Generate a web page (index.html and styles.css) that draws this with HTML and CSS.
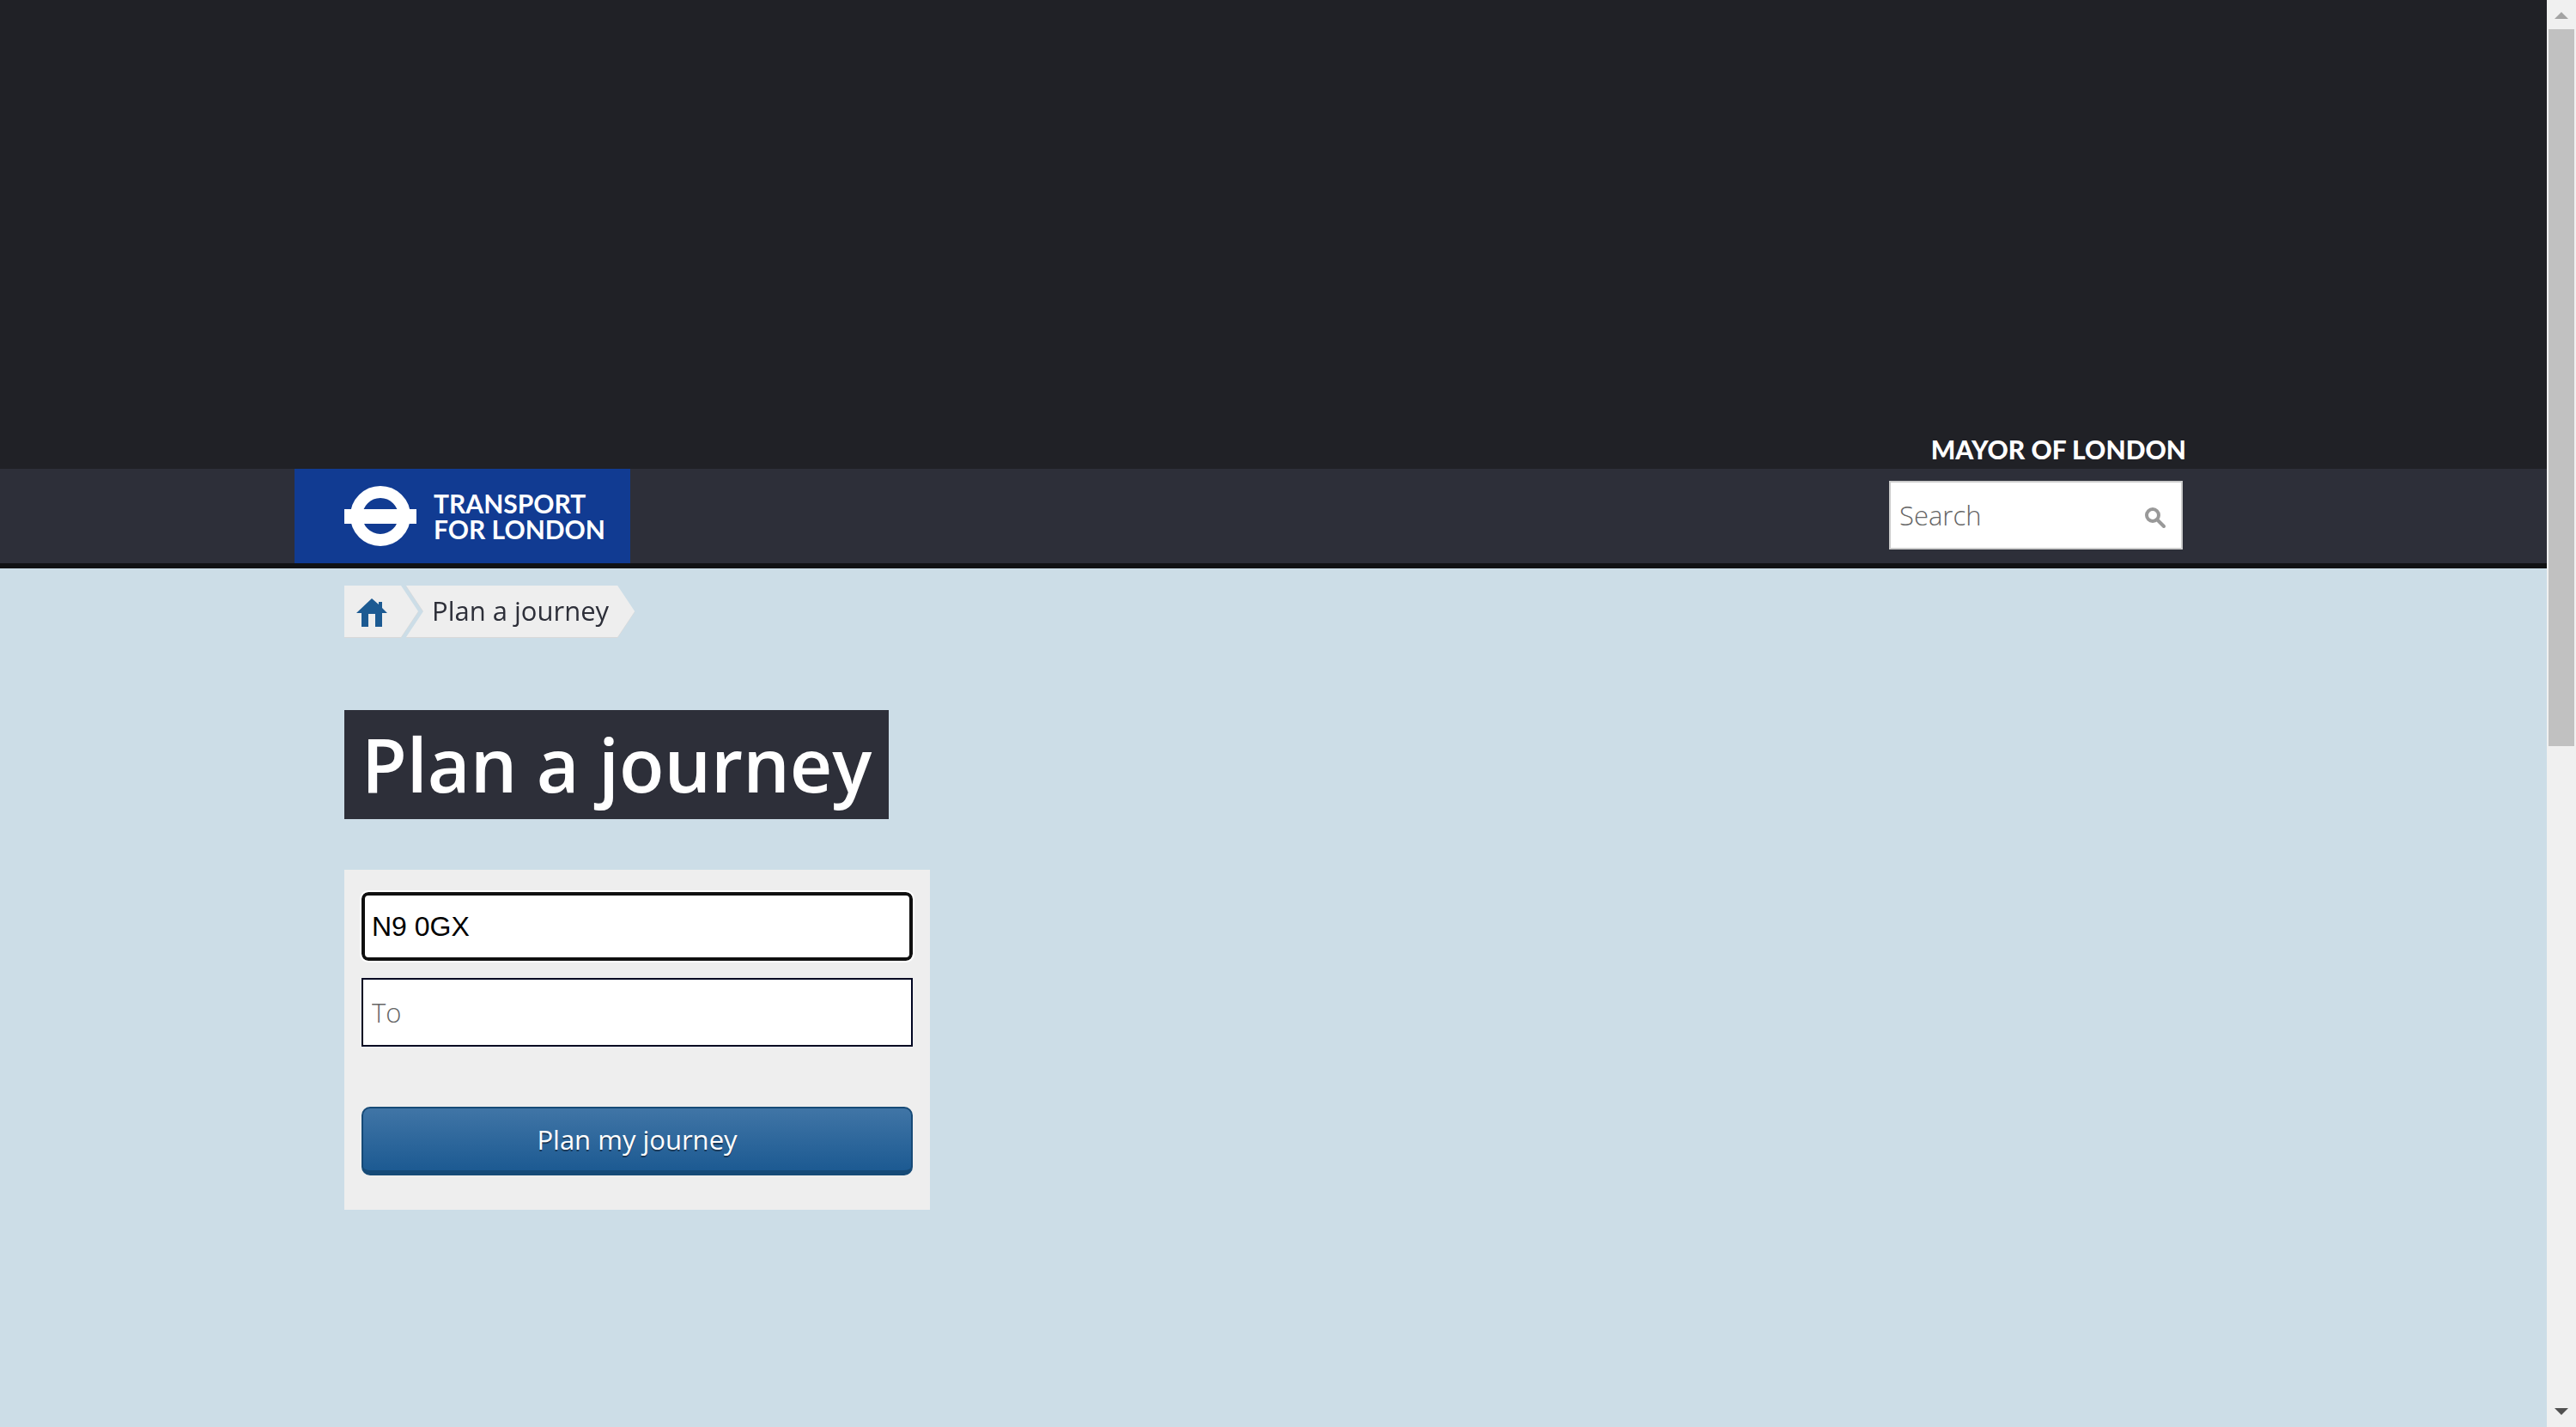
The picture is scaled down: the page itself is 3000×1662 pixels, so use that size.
FILE: index.html
```html
<!DOCTYPE html>
<html lang="en">
<head>
<meta charset="utf-8">
<title>Plan a journey - Transport for London</title>
<link rel="stylesheet" href="styles.css">
</head>
<body>
<div class="page">
  <header>
    <div class="promo">
      <div class="container promo-inner"><a class="mayor" href="#">MAYOR OF LONDON</a></div>
    </div>
    <div class="topbar">
      <div class="container topbar-inner">
        <a class="logo" href="#">
          <svg class="roundel" viewBox="0 0 84 70" aria-hidden="true">
            <circle cx="42" cy="35" r="28" fill="none" stroke="#fff" stroke-width="14"/>
            <rect x="0" y="27" width="84" height="17" fill="#fff"/>
          </svg>
          <span>TRANSPORT<br>FOR LONDON</span>
        </a>
        <form class="search" role="search">
          <input type="text" placeholder="Search" aria-label="Search">
          <button type="button" aria-label="Submit search">
            <svg viewBox="0 0 24 24" aria-hidden="true">
              <circle cx="9" cy="9" r="7" fill="none" stroke="#999" stroke-width="4"/>
              <path d="M14 14l8 8" stroke="#999" stroke-width="4" stroke-linecap="round"/>
            </svg>
          </button>
        </form>
      </div>
    </div>
  </header>
  <main class="container content">
    <nav class="crumbs" aria-label="Breadcrumb">
      <a class="home" href="#" aria-label="Home">
        <svg viewBox="0 0 36 33" aria-hidden="true">
          <path fill="#1c5a92" d="M18 0l8 7V4h4v7l6 6h-6v16h-8V18h-8v15H6V17H0z"/>
        </svg>
      </a>
      <span class="current">Plan a journey</span>
    </nav>
    <h1>Plan a journey</h1>
    <form class="planner">
      <input class="from" type="text" value="N9 0GX" aria-label="From">
      <input class="to" type="text" placeholder="To" aria-label="To">
      <button class="submit" type="button">Plan my journey</button>
    </form>
  </main>
</div>
<div class="scrollbar" aria-hidden="true">
  <svg class="arrow" viewBox="0 0 16 8"><path fill="#a3a3a3" d="M8 0l8 8H0z"/></svg>
  <div class="track"><div class="thumb"></div></div>
  <svg class="arrow" viewBox="0 0 16 8"><path fill="#505050" d="M0 0h16L8 8z"/></svg>
</div>
</body>
</html>
```
FILE: styles.css
```css
* {
  box-sizing: border-box;
}

body {
  margin: 0;
  display: flex;
  min-height: 100vh;
  background: #ccdde7;
  color: #2d2f39;
  font: 400 31px/40px "Open Sans", "Noto Sans", sans-serif;
}

input,
button {
  margin: 0;
  font: inherit;
}

input {
  font-weight: 300;
}

a {
  color: inherit;
  text-decoration: none;
}

.page {
  flex: 1;
  min-width: 0;
}

.container {
  max-width: 2280px;
  margin: 0 auto;
  padding: 0 58px;
}

.promo {
  background: #202126;
  padding-top: 502px;
}

.promo-inner {
  display: flex;
  justify-content: flex-end;
  padding-right: 77px;
}

.mayor {
  padding-bottom: 2px;
  color: #fff;
  font-family: Lato, sans-serif;
  font-size: 30px;
  font-weight: 900;
  line-height: 42px;
}

.topbar {
  background: #2d2f39;
  border-bottom: 6px solid #111214;
}

.topbar-inner {
  display: flex;
  justify-content: space-between;
  align-items: center;
  padding: 0 81px 0 0;
}

.logo {
  display: flex;
  align-items: center;
  gap: 20px;
  height: 110px;
  padding: 0 29px 0 58px;
  background: #113b92;
  color: #fff;
  font-family: Lato, sans-serif;
  font-size: 30px;
  font-weight: 700;
  line-height: 30px;
}

.roundel {
  width: 84px;
  height: 70px;
}

.search {
  display: flex;
  align-items: center;
  width: 342px;
  height: 80px;
  margin-bottom: 2px;
  padding: 0 18px 0 10px;
  background: #fff;
  border: 2px solid #ccc;
}

.search input {
  flex: 1;
  min-width: 0;
  padding: 0;
  border: 0;
  outline: 0;
}

.search button {
  display: flex;
  padding: 6px 0 0;
  border: 0;
  background: none;
}

.search svg {
  width: 24px;
  height: 24px;
}

::placeholder {
  color: #666;
  opacity: 1;
}

.crumbs {
  display: flex;
  padding-top: 20px;
  filter: drop-shadow(0 1px 0 #d8d8d8);
}

.home,
.current {
  display: flex;
  align-items: center;
  height: 60px;
  background: #eee;
}

.home {
  width: 86px;
  padding: 2px 0 0 14px;
  clip-path: polygon(0 0, 66px 0, 100% 50%, 66px 100%, 0 100%);
}

.home svg {
  width: 36px;
  height: 33px;
}

.current {
  margin-left: -14px;
  padding: 0 30px 2px;
  clip-path: polygon(0 0, calc(100% - 20px) 0, 100% 50%, calc(100% - 20px) 100%, 0 100%, 20px 50%);
}

h1 {
  width: fit-content;
  margin: 85px 0 59px;
  padding: 0 20px 2px;
  background: #2d2f39;
  color: #fff;
  font-size: 86px;
  font-weight: 600;
  line-height: 125px;
}

.planner {
  display: flex;
  flex-direction: column;
  width: 682px;
  padding: 26px 20px 40px;
  background: #eee;
}

.planner input,
.submit {
  height: 80px;
}

.planner .from {
  padding: 0 8px;
  border: 4px solid #101010;
  border-radius: 8px;
  outline: 2px solid #fff;
  color: #000;
  font-family: "Liberation Sans", Arial, sans-serif;
  font-size: 32px;
}

.to {
  margin: 20px 0 70px;
  padding: 0 10px;
  border: 2px solid #000622;
}

.submit {
  border: 2px solid #164a77;
  border-bottom-width: 6px;
  border-radius: 10px;
  background: linear-gradient(#4075a6, #1c5a92);
  color: #fff;
  text-shadow: 0 2px 0 #1a3a5a;
}

.scrollbar {
  display: flex;
  flex-direction: column;
  align-items: center;
  width: 34px;
  height: 100vh;
  padding: 14px 0;
  background: #f0f0f0;
}

.arrow {
  width: 16px;
  height: 8px;
}

.track {
  flex: 1;
  padding: 12px 0;
}

.thumb {
  width: 30px;
  height: 52.4%;
  background: #c1c1c1;
}
```
